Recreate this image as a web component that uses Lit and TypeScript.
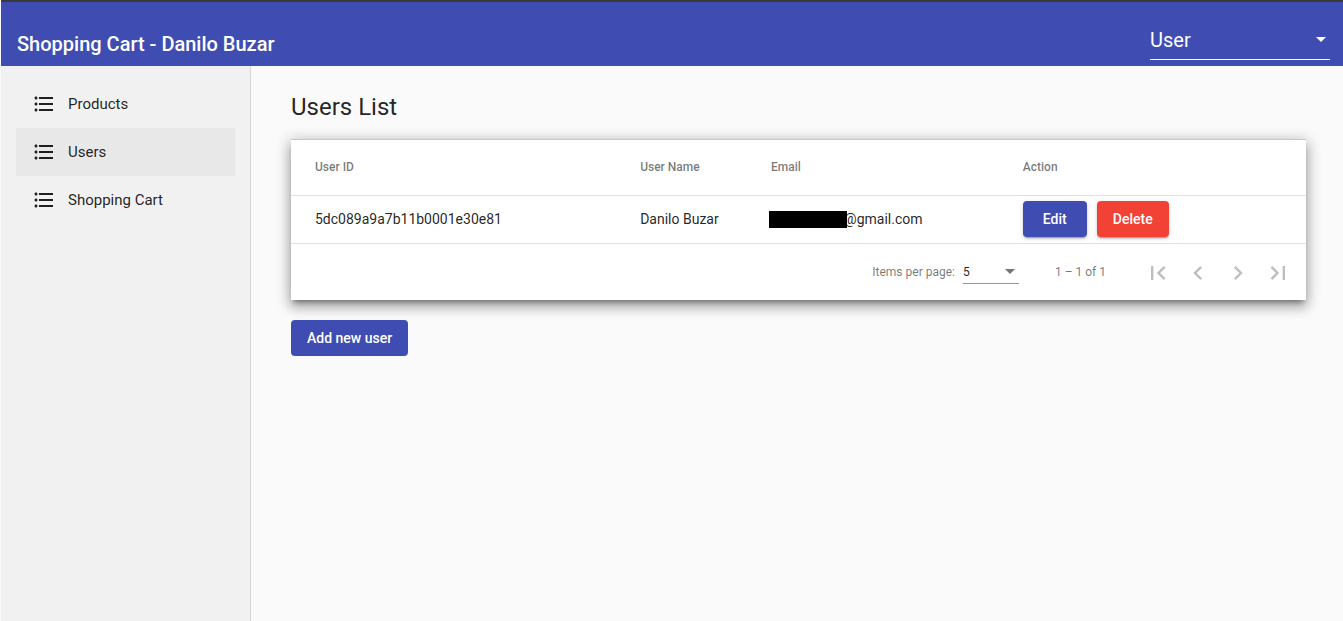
import { LitElement, html, css, svg } from "lit";
import { customElement } from "lit/decorators.js";
import { classMap } from "lit/directives/class-map.js";

interface User {
  id: string;
  name: string;
  mailDomain: string;
}

const NAV = ["Products", "Users", "Shopping Cart"];
const ACTIVE = "Users";

const USERS: User[] = [
  { id: "5dc089a9a7b11b0001e30e81", name: "Danilo Buzar", mailDomain: "@gmail.com" },
];

const PAGER = [
  { label: "First page", path: "M18.41 16.59L13.82 12l4.59-4.59L17 6l-6 6 6 6zM6 6h2v12H6z" },
  { label: "Previous page", path: "M15.41 7.41L14 6l-6 6 6 6 1.41-1.41L10.83 12z" },
  { label: "Next page", path: "M10 6L8.59 7.41 13.17 12l-4.58 4.59L10 18l6-6z" },
  { label: "Last page", path: "M5.59 7.41L10.18 12l-4.59 4.59L7 18l6-6-6-6zM16 6h2v12h-2z" },
];

const listIcon = svg`<path d="M4 10.5c-.83 0-1.5.67-1.5 1.5s.67 1.5 1.5 1.5 1.5-.67 1.5-1.5-.67-1.5-1.5-1.5zm0-6c-.83 0-1.5.67-1.5 1.5S3.17 7.5 4 7.5 5.5 6.83 5.5 6 4.83 4.5 4 4.5zm0 12c-.83 0-1.5.68-1.5 1.5s.68 1.5 1.5 1.5 1.5-.68 1.5-1.5-.67-1.5-1.5-1.5zM7 19h14v-2H7v2zm0-6h14v-2H7v2zm0-8v2h14V5H7z"/>`;

@customElement("app-root")
export class AppRoot extends LitElement {
  static styles = css`
    :host {
      display: flex;
      flex-direction: column;
      box-sizing: border-box;
      min-height: 100vh;
      padding-left: 1px;
      background: #fafafa;
      color: rgba(0, 0, 0, 0.87);
      font-family: Roboto, "Liberation Sans", sans-serif;
      font-size: 14px;
      line-height: 20px;
    }
    * {
      box-sizing: border-box;
    }
    .toolbar {
      display: flex;
      align-items: flex-end;
      justify-content: space-between;
      height: 66px;
      padding: 0 13px 6px 16px;
      border-top: 2px solid #3a3a3a;
      background: #3f4db3;
      color: #fff;
    }
    .brand {
      margin: 0;
      font-size: 20px;
      font-weight: 500;
      line-height: 32px;
    }
    .select {
      display: grid;
      align-items: center;
      border-bottom: 1px solid currentColor;
    }
    .select select,
    .select .arrow {
      grid-area: 1 / 1;
    }
    .select select {
      appearance: none;
      width: 100%;
      margin: 0;
      padding: 0;
      border: 0;
      border-radius: 0;
      background: transparent;
      font: inherit;
    }
    .arrow {
      justify-self: end;
      margin-right: 4px;
      border: 5px solid transparent;
      border-top-color: currentColor;
      border-bottom-width: 0;
      pointer-events: none;
    }
    .role {
      width: 180px;
      font-size: 20px;
      line-height: 24px;
    }
    .select.role select {
      height: 40px;
      padding-top: 2px;
      color: #fff;
    }
    .body {
      display: flex;
      flex: 1;
    }
    .side {
      flex: none;
      width: 250px;
      padding: 14px 15px;
      border-right: 1px solid #d6d6d6;
      background: #f1f1f1;
    }
    .link {
      display: flex;
      align-items: center;
      gap: 12px;
      height: 48px;
      padding: 0 16px;
      color: inherit;
      font-size: 15px;
      text-decoration: none;
    }
    .link.active {
      background: #e8e8e8;
    }
    svg {
      display: block;
      fill: currentColor;
    }
    .main {
      flex: 1;
      min-width: 0;
      padding: 25px 37px 24px 40px;
    }
    h1 {
      margin: 0 0 16px;
      font-size: 24px;
      font-weight: 400;
      line-height: 32px;
    }
    .card {
      margin-bottom: 20px;
      border-top: 1px solid #c8c8c8;
      background: #fff;
      background-clip: padding-box;
      box-shadow:
        0 5px 5px -3px rgba(0, 0, 0, 0.2),
        0 8px 10px 1px rgba(0, 0, 0, 0.14),
        0 3px 14px 2px rgba(0, 0, 0, 0.12),
        0 5px 5px -3px rgba(0, 0, 0, 0.2),
        0 3px 14px 2px rgba(0, 0, 0, 0.12);
    }
    table {
      width: 100%;
      border-collapse: separate;
      border-spacing: 0;
      table-layout: fixed;
    }
    th,
    td {
      padding: 0 0 1px;
      border-bottom: 1px solid #e0e0e0;
      text-align: left;
      vertical-align: middle;
    }
    th {
      height: 56px;
      color: rgba(0, 0, 0, 0.54);
      font-size: 12px;
      font-weight: 500;
    }
    td {
      height: 48px;
    }
    th:first-child,
    td:first-child {
      padding-left: 24px;
    }
    .c-id {
      width: 34.4%;
    }
    .c-name {
      width: 12.9%;
    }
    .c-mail {
      width: 24.8%;
    }
    .mail {
      display: flex;
      align-items: center;
      margin-left: -2px;
    }
    .redacted {
      z-index: 1;
      width: 78px;
      height: 17px;
      background: #000;
    }
    .domain {
      margin-left: -3px;
    }
    .actions {
      display: flex;
      gap: 10px;
    }
    .btn {
      min-width: 64px;
      height: 36px;
      padding: 0 16px;
      border: 0;
      border-radius: 4px;
      background: #3f4db3;
      color: #fff;
      font: inherit;
      font-weight: 500;
    }
    .actions .btn {
      box-shadow:
        0 3px 1px -2px rgba(0, 0, 0, 0.2),
        0 2px 2px 0 rgba(0, 0, 0, 0.14),
        0 1px 5px 0 rgba(0, 0, 0, 0.12);
    }
    .btn.warn {
      background: #f24135;
    }
    .pager {
      display: flex;
      align-items: center;
      justify-content: flex-end;
      height: 56px;
      padding-right: 8px;
      color: rgba(0, 0, 0, 0.54);
      font-size: 12px;
    }
    .size {
      width: 56px;
      margin: 0 36px 0 8px;
      border-bottom-color: #949494;
    }
    .size select {
      height: 22px;
      color: rgba(0, 0, 0, 0.87);
    }
    .range {
      margin-right: 32px;
    }
    .page {
      display: grid;
      place-items: center;
      width: 40px;
      height: 40px;
      padding: 2px 0 0;
      border: 0;
      background: none;
      color: rgba(0, 0, 0, 0.26);
    }
  `;

  render() {
    return html`
      <header class="toolbar">
        <p class="brand">Shopping Cart - Danilo Buzar</p>
        <div class="select role">
          <select aria-label="Role">
            <option>User</option>
          </select>
          <span class="arrow"></span>
        </div>
      </header>
      <div class="body">
        <nav class="side">
          ${NAV.map(
            (label) => html`<a
              class=${classMap({ link: true, active: label === ACTIVE })}
              href="#"
              ><svg width="24" height="24" viewBox="0 0 24 24" aria-hidden="true">${listIcon}</svg
              >${label}</a
            >`
          )}
        </nav>
        <main class="main">
          <h1>Users List</h1>
          <section class="card">
            <table>
              <thead>
                <tr>
                  <th class="c-id">User ID</th>
                  <th class="c-name">User Name</th>
                  <th class="c-mail">Email</th>
                  <th>Action</th>
                </tr>
              </thead>
              <tbody>
                ${USERS.map(
                  (u) => html`<tr>
                    <td>${u.id}</td>
                    <td>${u.name}</td>
                    <td>
                      <div class="mail">
                        <span class="redacted"></span><span class="domain">${u.mailDomain}</span>
                      </div>
                    </td>
                    <td>
                      <div class="actions">
                        <button class="btn">Edit</button>
                        <button class="btn warn">Delete</button>
                      </div>
                    </td>
                  </tr>`
                )}
              </tbody>
            </table>
            <div class="pager">
              <label for="page-size">Items per page:</label>
              <div class="select size">
                <select id="page-size">
                  <option>5</option>
                </select>
                <span class="arrow"></span>
              </div>
              <span class="range">1 – 1 of 1</span>
              ${PAGER.map(
                (p) => html`<button class="page" aria-label=${p.label} disabled>
                  <svg width="28" height="28" viewBox="0 0 24 24">
                    <path d=${p.path}></path>
                  </svg>
                </button>`
              )}
            </div>
          </section>
          <button class="btn">Add new user</button>
        </main>
      </div>
    `;
  }
}
